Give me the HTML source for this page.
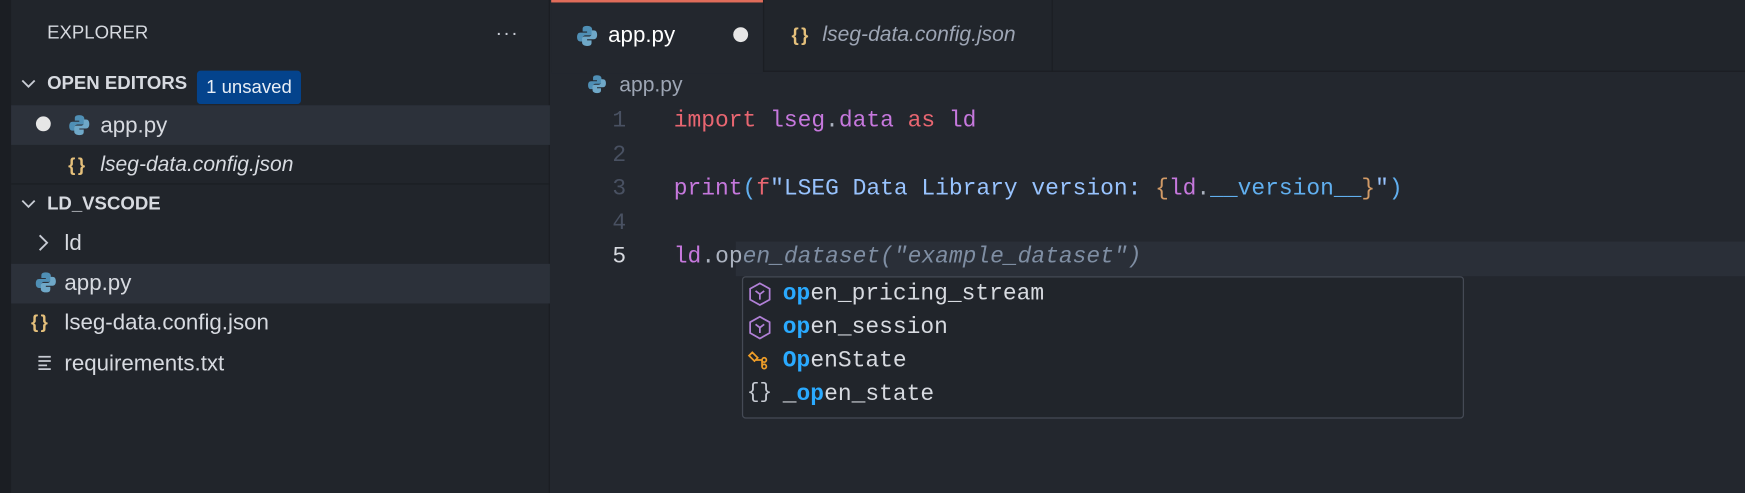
<!DOCTYPE html>
<html><head><style>
*{margin:0;padding:0;box-sizing:border-box}
html,body{width:1745px;height:493px;overflow:hidden;background:#23272e}
body{font-family:"Liberation Sans",sans-serif;color:#d7dae0;position:relative}
#wrap{position:absolute;left:0;top:0;width:1409px;height:398px;overflow:hidden;transform:scale(1.2386);transform-origin:0 0;background:#23272e}
.abs{position:absolute;white-space:nowrap}
#act{left:0;top:0;width:9px;height:398px;background:#1b1e23}
#side{left:9px;top:0;width:435px;height:398px;background:#21252b;border-right:1px solid #1b1e23}
.row{position:absolute;left:9px;width:435px;height:32px}
.sel{background:#2c313a}
.t{font-size:17px;color:#d7dae0}
.h{font-size:15px;font-weight:bold;color:#d7dae0}
.mono{font-family:"Liberation Mono",monospace;font-size:18.5px}
.ln{color:#495162;width:36px;text-align:center;left:482px}
.kw{color:#e86671}.pu{color:#c678dd}.bl{color:#61afef}.st{color:#98c3fe}.or{color:#d19a66}.gh{color:#7f8ea3;font-style:italic}
.json{color:#e5c07b;font-weight:bold;font-size:15px;letter-spacing:2px}
</style></head><body><div id="wrap">
<div class="abs" id="act"></div>
<div class="abs" id="side"></div>
<div class="abs t" style="left:38px;top:18px;font-size:15px">EXPLORER</div>
<div class="abs" style="left:400px;top:19px;font-size:16px;color:#c8ccd4;letter-spacing:1px">···</div>
<svg class="abs" style="left:16px;top:63px" width="14" height="10"><path d="M2 2l5 5 5-5" stroke="#c8ccd4" stroke-width="1.5" fill="none"/></svg>
<div class="abs h" style="left:38px;top:59px">OPEN EDITORS</div>
<div class="abs" style="left:159px;top:57px;width:84px;height:27px;background:#04438c;border-radius:3px;color:#e8eef6;font-size:15px;text-align:center;line-height:27px">1 unsaved</div>
<div class="row sel" style="top:85px"></div>
<div class="abs" style="left:29px;top:94px;width:12px;height:12px;border-radius:50%;background:#e6e6e6"></div>
<svg class="abs" style="left:55px;top:92px" width="18" height="18" viewBox="0 0 20 20"><path d="M10 1c-4 0-4 2-4 3v2h4v1H4C2 7 1 8.5 1 11s1 4 3 4h2v-3c0-1.5 1-2.5 2.5-2.5h4c1.2 0 2-.8 2-2V4c0-1.5-1.5-3-4.5-3z" fill="#4f8fb5"/><path d="M10 19c4 0 4-2 4-3v-2h-4v-1h6c2 0 3-1.5 3-4s-1-4-3-4h-2v3c0 1.5-1 2.5-2.5 2.5h-4c-1.2 0-2 .8-2 2V16c0 1.5 1.5 3 4.5 3z" fill="#6fa8c8"/></svg>
<div class="abs t" style="left:81px;top:91px;font-size:18px">app.py</div>
<div class="abs json" style="left:55px;top:125px">{}</div>
<div class="abs t" style="left:81px;top:123px;font-style:italic">lseg-data.config.json</div>
<div class="abs" style="left:9px;top:148px;width:435px;height:1px;background:#1b1e23"></div>
<svg class="abs" style="left:16px;top:160px" width="14" height="10"><path d="M2 2l5 5 5-5" stroke="#c8ccd4" stroke-width="1.5" fill="none"/></svg>
<div class="abs h" style="left:38px;top:156px">LD_VSCODE</div>
<svg class="abs" style="left:30px;top:188px" width="11" height="16"><path d="M2 2l6 6-6 6" stroke="#c8ccd4" stroke-width="1.5" fill="none"/></svg>
<div class="abs t" style="left:52px;top:186px;font-size:18px">ld</div>
<div class="row sel" style="top:213px"></div>
<svg class="abs" style="left:28px;top:219px" width="18" height="18" viewBox="0 0 20 20"><path d="M10 1c-4 0-4 2-4 3v2h4v1H4C2 7 1 8.5 1 11s1 4 3 4h2v-3c0-1.5 1-2.5 2.5-2.5h4c1.2 0 2-.8 2-2V4c0-1.5-1.5-3-4.5-3z" fill="#4f8fb5"/><path d="M10 19c4 0 4-2 4-3v-2h-4v-1h6c2 0 3-1.5 3-4s-1-4-3-4h-2v3c0 1.5-1 2.5-2.5 2.5h-4c-1.2 0-2 .8-2 2V16c0 1.5 1.5 3 4.5 3z" fill="#6fa8c8"/></svg>
<div class="abs t" style="left:52px;top:218px;font-size:18px">app.py</div>
<div class="abs json" style="left:25px;top:252px">{}</div>
<div class="abs t" style="left:52px;top:250px;font-size:18px">lseg-data.config.json</div>
<svg class="abs" style="left:30px;top:286px" width="13" height="13"><path d="M1 2h10M1 5.5h10M1 9h7M1 12h10" stroke="#c8ccd4" stroke-width="1.4"/></svg>
<div class="abs t" style="left:52px;top:283px;font-size:18px">requirements.txt</div>

<div class="abs" style="left:445px;top:0;width:1123px;height:58px;background:#21252b;border-bottom:1px solid #1b1e23"></div>
<div class="abs" style="left:445px;top:0;width:171px;height:59px;background:#23272e;border-top:2px solid #e06c5a"></div>
<div class="abs" style="left:616px;top:0;width:1px;height:58px;background:#1b1e23"></div>
<div class="abs" style="left:849px;top:0;width:1px;height:58px;background:#1b1e23"></div>
<svg class="abs" style="left:465px;top:20px" width="18" height="18" viewBox="0 0 20 20"><path d="M10 1c-4 0-4 2-4 3v2h4v1H4C2 7 1 8.5 1 11s1 4 3 4h2v-3c0-1.5 1-2.5 2.5-2.5h4c1.2 0 2-.8 2-2V4c0-1.5-1.5-3-4.5-3z" fill="#4f8fb5"/><path d="M10 19c4 0 4-2 4-3v-2h-4v-1h6c2 0 3-1.5 3-4s-1-4-3-4h-2v3c0 1.5-1 2.5-2.5 2.5h-4c-1.2 0-2 .8-2 2V16c0 1.5 1.5 3 4.5 3z" fill="#6fa8c8"/></svg>
<div class="abs t" style="left:491px;top:18px;font-size:18px;color:#fff">app.py</div>
<div class="abs" style="left:592px;top:22px;width:12px;height:12px;border-radius:50%;background:#e6e6e6"></div>
<div class="abs json" style="left:639px;top:20px">{}</div>
<div class="abs t" style="left:664px;top:18px;font-style:italic;color:#9da5b4">lseg-data.config.json</div>
<svg class="abs" style="left:474px;top:60px" width="16" height="16" viewBox="0 0 20 20"><path d="M10 1c-4 0-4 2-4 3v2h4v1H4C2 7 1 8.5 1 11s1 4 3 4h2v-3c0-1.5 1-2.5 2.5-2.5h4c1.2 0 2-.8 2-2V4c0-1.5-1.5-3-4.5-3z" fill="#4f8fb5"/><path d="M10 19c4 0 4-2 4-3v-2h-4v-1h6c2 0 3-1.5 3-4s-1-4-3-4h-2v3c0 1.5-1 2.5-2.5 2.5h-4c-1.2 0-2 .8-2 2V16c0 1.5 1.5 3 4.5 3z" fill="#6fa8c8"/></svg>
<div class="abs t" style="left:500px;top:59px;color:#9da5b4">app.py</div>
<div class="abs" style="left:594px;top:195px;width:974px;height:28px;background:#2a2f38"></div>
<div class="abs mono ln" style="top:87px">1</div>
<div class="abs mono ln" style="top:115px">2</div>
<div class="abs mono ln" style="top:142px">3</div>
<div class="abs mono ln" style="top:170px">4</div>
<div class="abs mono ln" style="top:197px;color:#d7dae0">5</div>
<div class="abs mono" style="left:544px;top:87px"><span class="kw">import</span> <span class="pu">lseg</span><span style="color:#abb2bf">.</span><span class="pu">data</span> <span class="kw">as</span> <span class="pu">ld</span></div>
<div class="abs mono" style="left:544px;top:142px"><span class="pu">print</span><span class="bl">(</span><span class="kw">f</span><span class="st">"LSEG Data Library version: </span><span class="or">{</span><span class="pu">ld</span><span style="color:#abb2bf">.</span><span class="bl">__version__</span><span class="or">}</span><span class="st">"</span><span class="bl">)</span></div>
<div class="abs mono" style="left:544px;top:197px"><span class="pu">ld</span><span style="color:#abb2bf">.op</span><span class="gh">en_dataset("example_dataset")</span></div>
<div class="abs" style="left:599px;top:223px;width:583px;height:115px;background:#21252b;border:1px solid #454a55;border-radius:3px"></div>
<svg class="abs" style="left:603px;top:227px" width="21" height="21" viewBox="0 0 24 24"><path d="M12 2l9 5v10l-9 5-9-5V7z" stroke="#b180d7" stroke-width="1.6" fill="none"/><path d="M8 9l4 3 4-3M12 12v5" stroke="#b180d7" stroke-width="1.6" fill="none"/></svg>
<svg class="abs" style="left:603px;top:254px" width="21" height="21" viewBox="0 0 24 24"><path d="M12 2l9 5v10l-9 5-9-5V7z" stroke="#b180d7" stroke-width="1.6" fill="none"/><path d="M8 9l4 3 4-3M12 12v5" stroke="#b180d7" stroke-width="1.6" fill="none"/></svg>
<svg class="abs" style="left:603px;top:281px" width="21" height="21" viewBox="0 0 24 24"><path d="M2 7l3-3 5 5-3 3zM8 11h6v6M14 11a2 2 0 1 0 4 0 2 2 0 1 0-4 0M14 17a2 2 0 1 0 4 0 2 2 0 1 0-4 0" stroke="#ee9d28" stroke-width="1.6" fill="none"/></svg>
<div class="abs mono" style="left:603px;top:308px;color:#c8ccd4;font-size:17px">{}</div>
<div class="abs mono" style="left:632px;top:227px;color:#d7dae0"><b style="color:#2aaaff">op</b>en_pricing_stream</div>
<div class="abs mono" style="left:632px;top:254px;color:#d7dae0"><b style="color:#2aaaff">op</b>en_session</div>
<div class="abs mono" style="left:632px;top:281px;color:#d7dae0"><b style="color:#2aaaff">Op</b>enState</div>
<div class="abs mono" style="left:632px;top:308px;color:#d7dae0">_<b style="color:#2aaaff">op</b>en_state</div>
</div></body></html>
